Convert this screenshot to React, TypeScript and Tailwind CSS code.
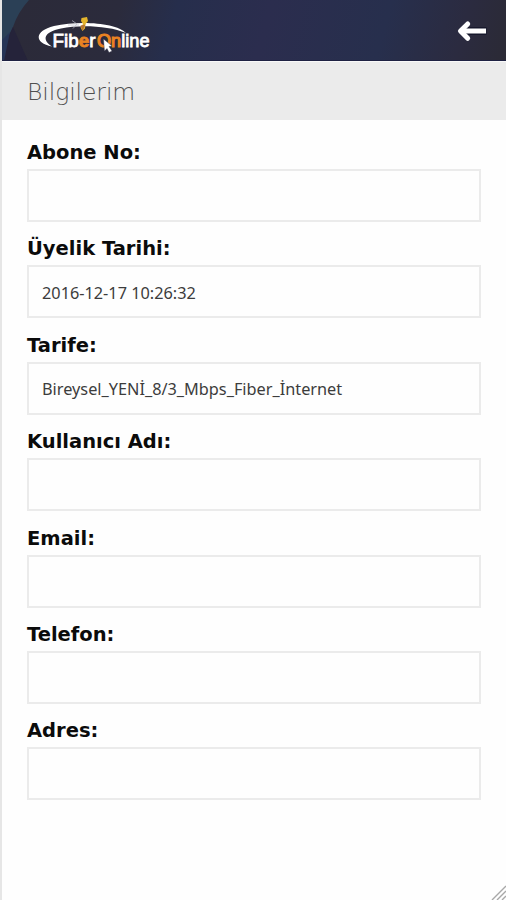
const fields = [
  { label: 'Abone No:', value: '' },
  { label: 'Üyelik Tarihi:', value: '2016-12-17 10:26:32' },
  { label: 'Tarife:', value: 'Bireysel_YENİ_8/3_Mbps_Fiber_İnternet' },
  { label: 'Kullanıcı Adı:', value: '' },
  { label: 'Email:', value: '' },
  { label: 'Telefon:', value: '' },
  { label: 'Adres:', value: '' },
];

function Logo() {
  return (
    <svg className="block h-[48px] w-[130px]" viewBox="30 10 130 48" role="img" aria-label="Fiber Online">
      <path d="M52 46.500C34 43 34 31 54 26C80 20 117 23 126 33C109 25.800 80 24.500 61 28.500C43 32 42 40 52 46.500Z" fill="#fff" />
      <path d="M72 20.500L77 24L73 28.500M68 25H79" fill="none" stroke="#b7bac8" strokeWidth="0.7" />
      <path d="M81.500 18L87 17L88 21L85.500 24L85 28.500L82.500 31L80.500 27.500L83 24L81 21Z" fill="#e3b52d" />
      <path d="M80.500 25.500L85.500 24.500L82.500 31Z" fill="#b57635" />
      <g fontFamily="'Liberation Sans', Arial, sans-serif" fontSize="18.500" fill="#fff" stroke="#fff" strokeWidth="0.8">
        <text x="52.500" y="46.500" textLength="43" lengthAdjust="spacingAndGlyphs">Fib<tspan fill="#e98222" stroke="#e98222" fontWeight="700">e</tspan>r</text>
        <text x="97" y="46.500" textLength="52.500" lengthAdjust="spacingAndGlyphs"><tspan fill="#e98222" stroke="#e98222" strokeWidth="1.2">On</tspan>line</text>
      </g>
      <path d="M103.500 39L112 46L109 46.500L112 51L109 52.500L107 48.500L104.500 51Z" fill="#fff" stroke="#35334a" strokeWidth="0.4" />
    </svg>
  );
}

function Header() {
  return (
    <header className="relative flex h-[61px] items-start justify-between overflow-hidden border-b border-[#1e2142] bg-[linear-gradient(105deg,#2b2a38_0%,#2b2b3c_23%,#262e4c_34%,#2b2d4e_52%,#272f4d_75%,#2b2b40_90%,#2b2a35_100%)]">
      <svg className="absolute left-0 top-0 h-[61px] w-[40px]" viewBox="0 0 40 61" aria-hidden="true">
        <path d="M0 0H27Q16 12 11 27L0 50Z" fill="#2b4056" />
        <path d="M11 27L26 61H0V50Z" fill="#25233a" />
        <path d="M0 40L8 32L2 61H0Z" fill="#263456" />
      </svg>
      <div className="relative ml-[28px] mt-[10px]"><Logo /></div>
      <button type="button" aria-label="Geri" className="mr-[18px] mt-[19px]">
        <svg className="block h-[24px] w-[32px]" viewBox="0 0 32 24" fill="none" stroke="#fff" strokeWidth="5">
          <path d="M8 12H30.500" stroke="#17182c" strokeWidth="8" />
          <path d="M5 12H30" />
          <path d="M11.700 5L4.500 12L11.700 19.300" strokeLinecap="round" strokeLinejoin="round" />
        </svg>
      </button>
    </header>
  );
}

export default function App() {
  return (
    <div className="relative h-[900px] w-[506px] overflow-hidden border-l-2 border-[#e6e6e6] bg-[#fefefe]">
      <Header />
      <div className="flex h-[59px] items-center border-t border-[#f8f8f8] bg-[#ebebeb] pl-[25px] pt-[3px]">
        <h1 className="font-['DejaVu_Sans_Light','DejaVu_Sans',sans-serif] text-[23.5px] font-extralight tracking-[-0.1px] text-[#505050]">Bilgilerim</h1>
      </div>
      <form className="px-[25px] pt-[17px]">
        {fields.map(({ label, value }) => (
          <div key={label} className="h-[96.400px]">
            <label className="block h-[32px] whitespace-nowrap pt-px font-['DejaVu_Sans',sans-serif] text-[19.500px] font-bold leading-[30px] text-[#0b0b0b]">{label}</label>
            <div className="flex h-[53px] w-[454px] items-center border-2 border-[#ebebeb] pl-[13px] pt-[2px] font-['Noto_Sans',sans-serif] text-[16.300px] text-[#3c3c3c]">
              {value}
            </div>
          </div>
        ))}
      </form>
      <svg className="absolute bottom-0 right-0 h-[15px] w-[15px]" viewBox="0 0 15 15" stroke="#a8a8a8" strokeWidth="1.4" aria-hidden="true">
        <path d="M1 15L15 1M6 15L15 6M11 15L15 11" />
      </svg>
    </div>
  );
}
